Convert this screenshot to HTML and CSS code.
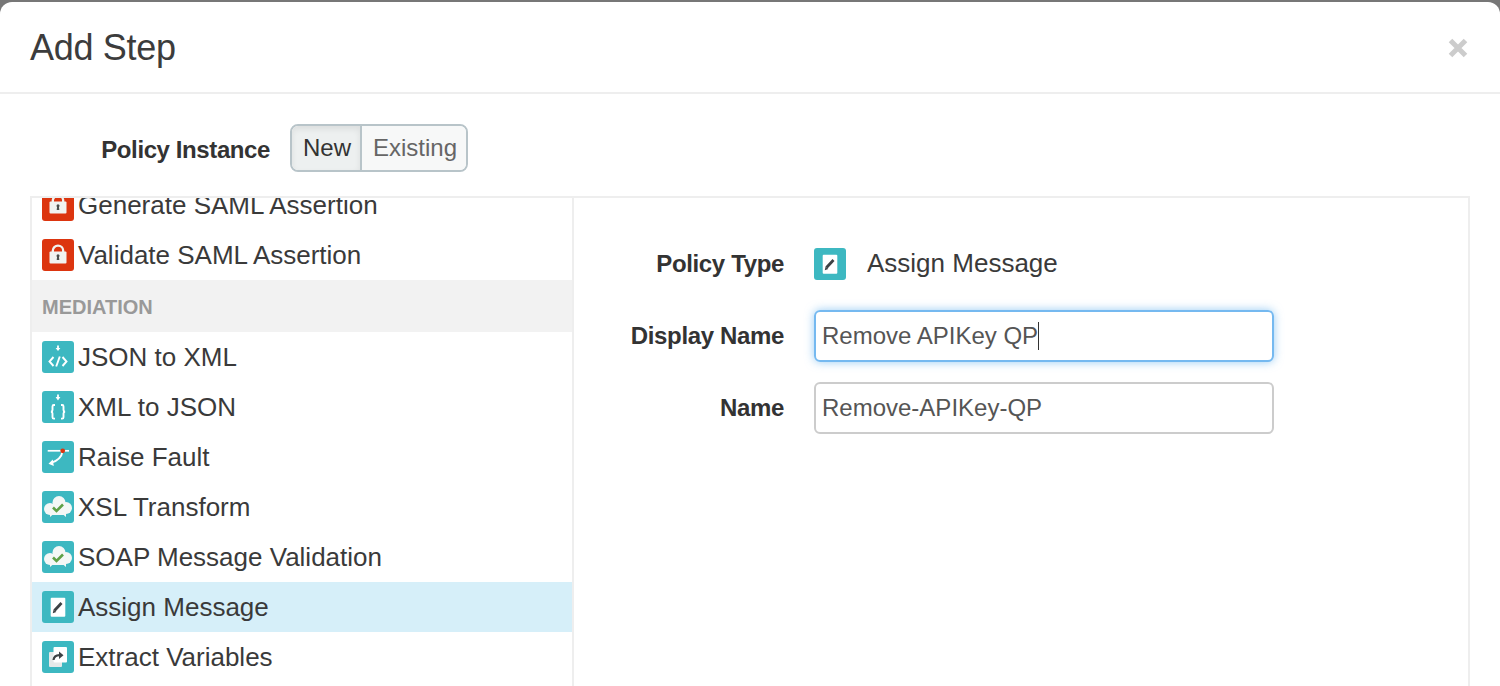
FILE: index.html
```html
<!DOCTYPE html>
<html lang="en">

<head>
	<meta charset="UTF-8">
	<meta name="viewport" content="width=device-width, initial-scale=1.0">
	<title>Add Step</title>
	<link rel="stylesheet" href="styles.css">
</head>

<body>
	<svg class="icon-defs" xmlns="http://www.w3.org/2000/svg">
		<symbol id="i-lock" viewBox="0 0 32 32">
			<rect width="32" height="32" rx="3" fill="#dc350f" />
			<path d="M10.800 13V11.800a5.200 5.200 0 0 1 10.400 0V13" fill="none" stroke="#f1f3f1" stroke-width="2.300" />
			<rect x="7.500" y="12.500" width="17" height="12" rx="1" fill="#f1f3f1" />
			<circle cx="16" cy="16.800" r="1.500" fill="#4a4f4c" />
			<path d="M15.200 17h1.600l.5 4h-2.600z" fill="#4a4f4c" />
		</symbol>
		<symbol id="i-json" viewBox="0 0 32 32">
			<rect width="32" height="32" rx="3" fill="#3db8c1" />
			<path d="M16 4.500v3" stroke="#fff" stroke-width="1.800" />
			<path d="M13.600 7h4.800L16 10z" fill="#fff" />
			<path d="M11.500 16l-4 4.500 4 4.500M20.500 16l4 4.500-4 4.500M17.800 15.500l-3.600 10" fill="none" stroke="#fff" stroke-width="1.900" />
		</symbol>
		<symbol id="i-xml" viewBox="0 0 32 32">
			<rect width="32" height="32" rx="3" fill="#3db8c1" />
			<path d="M16 3.500v3" stroke="#fff" stroke-width="1.800" />
			<path d="M13.600 6h4.800L16 9.500z" fill="#fff" />
			<path d="M13 14h-1.200q-1.300 0-1.300 1.400v3.600q0 1.600-1.500 1.800 1.500.2 1.500 1.800v3.600q0 1.400 1.300 1.400H13M19 14h1.200q1.300 0 1.300 1.400v3.600q0 1.600 1.500 1.800-1.500.2-1.500 1.800v3.600q0 1.400-1.300 1.400H19" fill="none" stroke="#fff" stroke-width="1.900" />
		</symbol>
		<symbol id="i-fault" viewBox="0 0 32 32">
			<rect width="32" height="32" rx="3" fill="#3db8c1" />
			<path d="M5.700 9.800h21.300" stroke="#fff" stroke-width="1.700" />
			<path d="M20.700 10q-1.500 9-12 12" fill="none" stroke="#fff" stroke-width="1.800" />
			<path d="M10.800 18.500L6.500 22.800l5.300 2.200z" fill="#fff" />
			<circle cx="20.700" cy="9.800" r="2.400" fill="#dc350f" />
		</symbol>
		<symbol id="i-cloud" viewBox="0 0 32 32">
			<rect width="32" height="32" rx="3" fill="#3db8c1" />
			<g fill="#f4f7f6">
				<circle cx="8" cy="18" r="6" />
				<circle cx="17" cy="11.500" r="6.500" />
				<circle cx="24" cy="17" r="6" />
				<rect x="8" y="13" width="16" height="11" />
				<path d="M8 23v3l3.500-3zM24 23v3l-3.500-3z" />
			</g>
			<path d="M11 16.500l3.500 3.500 6.500-6.500" fill="none" stroke="#5fa046" stroke-width="2.600" />
		</symbol>
		<symbol id="i-assign" viewBox="0 0 32 32">
			<rect width="32" height="32" rx="3" fill="#3db8c1" />
			<rect x="8.700" y="6.700" width="14.600" height="19" rx="1" fill="#fff" />
			<path d="M12.500 19.500l7-7.500" stroke="#3d4144" stroke-width="2.800" />
			<path d="M10.800 22.200l.8-3.600 2.700 2.500z" fill="#3d4144" />
		</symbol>
		<symbol id="i-extract" viewBox="0 0 32 32">
			<rect width="32" height="32" rx="3" fill="#3db8c1" />
			<rect x="7" y="11" width="13" height="15" rx="1" fill="#e6e9e9" />
			<rect x="11.500" y="6" width="13.500" height="15.500" rx="1" fill="#fff" />
			<path d="M11.500 19q.5-4.500 6-4.800" fill="none" stroke="#3d4144" stroke-width="2.200" />
			<path d="M17 10.500l4.500 3.700-4.500 3.700z" fill="#3d4144" />
		</symbol>
	</svg>

	<div class="modal">
		<div class="modal-header">
			<h3 class="modal-title">Add Step</h3>
			<svg class="close" viewBox="0 0 20 20" aria-label="Close">
				<path d="M2.500 2.500l15 15M17.500 2.500l-15 15" stroke="#ccc" stroke-width="5" />
			</svg>
		</div>

		<div class="modal-body">
			<div class="instance-row">
				<span class="instance-label">Policy Instance</span>
				<div class="btn-group">
					<button class="btn active">New</button>
					<button class="btn">Existing</button>
				</div>
			</div>

			<div class="step-panel">
				<div class="policy-list">
					<ul class="policy-items">
						<li class="policy-item"><svg class="icon"><use href="#i-lock" /></svg>Generate SAML Assertion</li>
						<li class="policy-item"><svg class="icon"><use href="#i-lock" /></svg>Validate SAML Assertion</li>
						<li class="policy-heading">MEDIATION</li>
						<li class="policy-item"><svg class="icon"><use href="#i-json" /></svg>JSON to XML</li>
						<li class="policy-item"><svg class="icon"><use href="#i-xml" /></svg>XML to JSON</li>
						<li class="policy-item"><svg class="icon"><use href="#i-fault" /></svg>Raise Fault</li>
						<li class="policy-item"><svg class="icon"><use href="#i-cloud" /></svg>XSL Transform</li>
						<li class="policy-item"><svg class="icon"><use href="#i-cloud" /></svg>SOAP Message Validation</li>
						<li class="policy-item selected"><svg class="icon"><use href="#i-assign" /></svg>Assign Message</li>
						<li class="policy-item"><svg class="icon"><use href="#i-extract" /></svg>Extract Variables</li>
					</ul>
				</div>

				<div class="policy-form">
					<div class="form-row">
						<label class="form-label">Policy Type</label>
						<svg class="icon"><use href="#i-assign" /></svg>
						<span class="type-name">Assign Message</span>
					</div>
					<div class="form-row">
						<label class="form-label">Display Name</label>
						<div class="text-field focused">Remove APIKey QP<span class="caret"></span></div>
					</div>
					<div class="form-row">
						<label class="form-label">Name</label>
						<div class="text-field">Remove-APIKey-QP</div>
					</div>
				</div>
			</div>
		</div>
	</div>
</body>

</html>
```

FILE: styles.css
```css
html,
body {
	margin: 0;
	height: 686px;
	overflow: hidden;
}

body {
	background-color: #777;
	padding-top: 2px;
	box-sizing: border-box;
	font-family: "Liberation Sans", Arial, sans-serif;
	color: #333;
}

.icon-defs {
	display: none;
}

.icon {
	width: 32px;
	height: 32px;
	flex: none;
}

.modal {
	background-color: #fff;
	border-radius: 12px 12px 0 0;
	height: 684px;
	overflow: hidden;
}

.modal-header {
	display: flex;
	align-items: center;
	justify-content: space-between;
	height: 90px;
	padding: 0 32px 0 30px;
	border-bottom: 2px solid #eee;
}

.modal-title {
	margin: 2px 0 0;
	font-size: 36px;
	font-weight: normal;
	letter-spacing: -0.3px;
	color: #3c3c3c;
}

.close {
	width: 20px;
	height: 20px;
	margin-top: 2px;
}

.modal-body {
	padding: 30px 30px 0;
}

.instance-row {
	display: flex;
	align-items: center;
	gap: 20px;
	height: 48px;
	margin-bottom: 24px;
}

.instance-label {
	width: 240px;
	margin-top: 3px;
	text-align: right;
	font-size: 24px;
	font-weight: bold;
	letter-spacing: -0.4px;
}

.btn-group {
	display: flex;
	height: 48px;
	border: 2px solid #b8c4c9;
	border-radius: 8px;
	box-sizing: border-box;
	overflow: hidden;
}

.btn {
	padding: 0 9px 0 11px;
	border: none;
	background-color: #f7f8f8;
	font-family: inherit;
	font-size: 24px;
	color: #666;
}

.btn.active {
	background-color: #edf0f0;
	border-right: 2px solid #b8c4c9;
	box-shadow: inset 0 3px 6px rgba(0, 0, 0, 0.08);
	color: #333;
}

.step-panel {
	display: flex;
	height: 600px;
	border: 2px solid #eee;
	border-bottom: none;
	width: 1440px;
	box-sizing: border-box;
}

.policy-list {
	width: 540px;
	flex: none;
	border-right: 2px solid #eee;
	overflow: hidden;
}

.policy-items {
	list-style: none;
	margin: -18px 0 0;
	padding: 0;
}

.policy-item {
	display: flex;
	align-items: center;
	gap: 4px;
	height: 50px;
	padding-left: 10px;
	font-size: 26px;
	color: #3a3a3a;
}

.policy-item.selected {
	background-color: #d6eff9;
}

.policy-heading {
	height: 52px;
	line-height: 54px;
	padding-left: 10px;
	background-color: #f2f2f2;
	font-size: 20px;
	font-weight: bold;
	color: #999;
}

.policy-form {
	flex: 1;
	padding-top: 40px;
}

.form-row {
	display: flex;
	align-items: center;
	gap: 30px;
	height: 52px;
	margin-bottom: 20px;
}

.form-label {
	width: 210px;
	text-align: right;
	font-size: 24px;
	font-weight: bold;
	letter-spacing: -0.35px;
}

.type-name {
	margin: -2px 0 0 -9px;
	font-size: 26px;
	color: #3a3a3a;
}

.text-field {
	display: flex;
	align-items: center;
	width: 460px;
	height: 52px;
	box-sizing: border-box;
	padding: 0 6px;
	border: 2px solid #ccc;
	border-radius: 6px;
	font-size: 24px;
	color: #555;
}

.text-field.focused {
	border-color: #75b9f0;
	box-shadow: 0 0 10px rgba(82, 168, 236, 0.6);
}

.caret {
	width: 1px;
	height: 28px;
	background-color: #333;
}
```
